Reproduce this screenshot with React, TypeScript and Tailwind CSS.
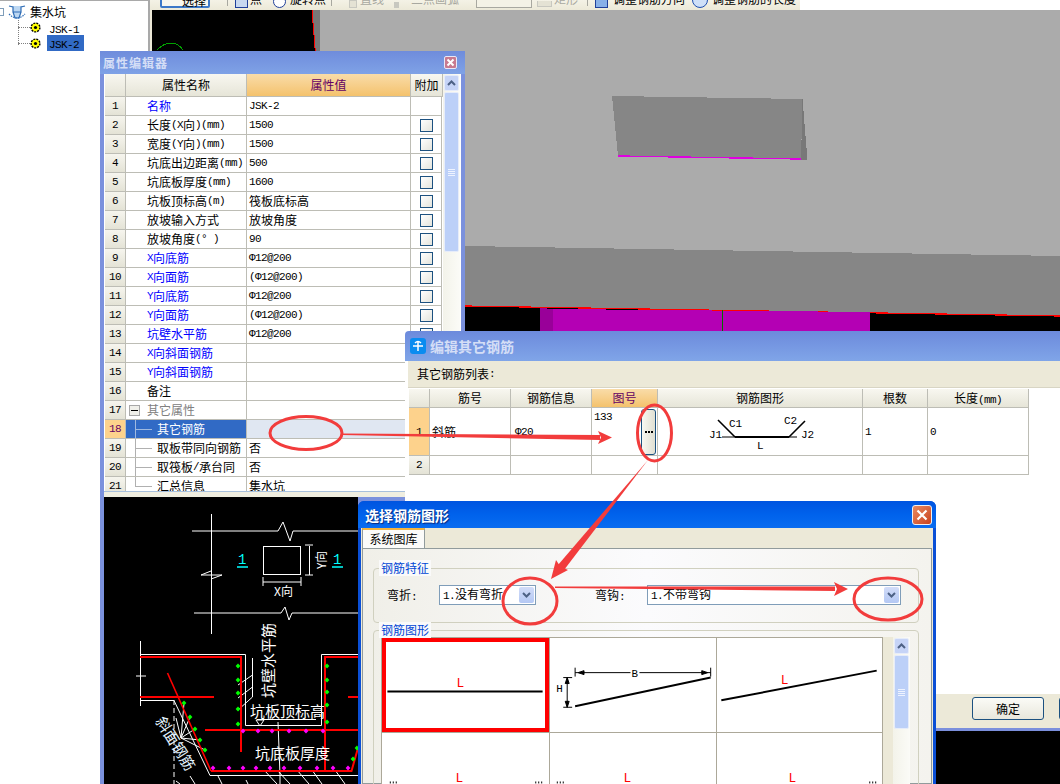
import React from "react";

const latinClass = "font-['Liberation_Mono',monospace] text-[11px] tracking-[-0.6px]";

function T({ children }: { children: string }) {
  const parts = children.split(/([\x00-\x7f°Φ]+)/).filter(Boolean);
  return (
    <>
      {parts.map((p, i) =>
        /[\x00-\x7f°Φ]/.test(p[0]) ? (
          <span key={i} className={latinClass}>
            {p}
          </span>
        ) : (
          <span key={i}>{p}</span>
        )
      )}
    </>
  );
}

const rows: { n: number; name: string; val?: string; blue?: boolean; noCheck?: boolean }[] = [
  { n: 1, name: "名称", val: "JSK-2", blue: true, noCheck: true },
  { n: 2, name: "长度(X向)(mm)", val: "1500" },
  { n: 3, name: "宽度(Y向)(mm)", val: "1500" },
  { n: 4, name: "坑底出边距离(mm)", val: "500" },
  { n: 5, name: "坑底板厚度(mm)", val: "1600" },
  { n: 6, name: "坑板顶标高(m)", val: "筏板底标高" },
  { n: 7, name: "放坡输入方式", val: "放坡角度" },
  { n: 8, name: "放坡角度(° )", val: "90" },
  { n: 9, name: "X向底筋", val: "Φ12@200", blue: true },
  { n: 10, name: "X向面筋", val: "(Φ12@200)", blue: true },
  { n: 11, name: "Y向底筋", val: "Φ12@200", blue: true },
  { n: 12, name: "Y向面筋", val: "(Φ12@200)", blue: true },
  { n: 13, name: "坑壁水平筋", val: "Φ12@200", blue: true },
  { n: 14, name: "X向斜面钢筋", blue: true, noCheck: true },
  { n: 15, name: "Y向斜面钢筋", blue: true, noCheck: true },
  { n: 16, name: "备注", noCheck: true },
];

const subRows = [
  { n: 19, name: "取板带同向钢筋", val: "否" },
  { n: 20, name: "取筏板/承台同", val: "否" },
  { n: 21, name: "汇总信息", val: "集水坑" },
];

const numCell =
  "w-[21px] shrink-0 flex items-center justify-center border-r border-b border-[#bdbdb5] bg-gradient-to-b from-[#f6f5ee] to-[#e4e3d6]";

function Check() {
  return <span className="block w-[13px] h-[13px] ml-[1px] border border-[#1c5180] bg-gradient-to-br from-[#ffffff] to-[#e4e4dc]" />;
}

function PropRow({ r }: { r: (typeof rows)[number] }) {
  return (
    <div className="flex h-[19px] shrink-0">
      <div className={numCell}>
        <T>{String(r.n)}</T>
      </div>
      <div className={`w-[121px] shrink-0 pl-[21px] flex items-center border-r border-b border-[#bdbdb5] whitespace-nowrap ${r.blue ? "text-[#0000ff]" : ""}`}>
        <T>{r.name}</T>
      </div>
      <div className="w-[164px] shrink-0 pl-[2px] flex items-center border-r border-b border-[#bdbdb5] whitespace-nowrap">
        {r.val ? <T>{r.val}</T> : null}
      </div>
      <div className="w-[31px] shrink-0 flex items-center justify-center border-r border-b border-[#bdbdb5]">
        {r.noCheck ? null : <Check />}
      </div>
    </div>
  );
}

function TreeLines({ last }: { last?: boolean }) {
  return (
    <>
      <span className={`absolute left-[9px] top-0 w-px bg-[#b0b0b0] ${last ? "h-[10px]" : "h-[19px]"}`} />
      <span className="absolute left-[9px] top-[9px] w-[17px] h-px bg-[#b0b0b0]" />
    </>
  );
}

function ScrollBar({ thumbH }: { thumbH: string }) {
  return (
    <div className="w-[17px] shrink-0 h-full flex flex-col items-center pt-[1px] gap-[1px] bg-gradient-to-r from-[#f3f3ea] to-[#fbfbf7]">
      <div className="w-[15px] h-[16px] shrink-0 rounded-[2px] border border-[#e6ecfa] bg-[#c6d4f7] flex items-center justify-center">
        <svg width="9" height="6" viewBox="0 0 9 6">
          <path d="M1 5L4.5 1.5L8 5" fill="none" stroke="#4d6185" strokeWidth="2" />
        </svg>
      </div>
      <div className={`w-[15px] shrink-0 rounded-[2px] border border-[#e6ecfa] bg-[#bcd0f8] flex flex-col items-center justify-center gap-[1px] ${thumbH}`}>
        <span className="w-[7px] h-px bg-[#eef3ff]" />
        <span className="w-[7px] h-px bg-[#eef3ff]" />
        <span className="w-[7px] h-px bg-[#eef3ff]" />
        <span className="w-[7px] h-px bg-[#eef3ff]" />
      </div>
    </div>
  );
}

function Gear() {
  return (
    <svg width="11" height="11" viewBox="0 0 11 11" className="shrink-0">
      <circle cx="5.5" cy="5.5" r="4.4" fill="#ffff00" stroke="#000" strokeWidth="1.4" strokeDasharray="2 1" />
      <circle cx="5.5" cy="5.5" r="1.6" fill="#000" />
    </svg>
  );
}

function Tree() {
  return (
    <div className="relative w-[150px] h-full shrink-0 bg-white">
      <div className="h-[52px] border-t border-r-2 border-[#a9a9a9] relative">
        <span className="absolute left-[-4px] top-[7px] w-[8px] h-[8px] border border-[#7f9db9] bg-white" />
        <svg className="absolute left-[8px] top-[4px]" width="18" height="16" viewBox="0 0 18 16">
          <path d="M1 1L5 2L5 7L13 7L13 2L17 1M5 7L7 13L11 13L13 7" fill="#bcd7f2" stroke="#2f6db5" strokeWidth="1.2" />
          <path d="M1 9Q9 17 17 9" fill="none" stroke="#2f6db5" strokeWidth="1.2" strokeDasharray="1.5 1" />
        </svg>
        <span className="absolute left-[30px] top-[2px] leading-[17px] text-[12px] whitespace-nowrap">集水坑</span>
        <span className="absolute left-[18px] top-[19px] h-[25px] border-l border-dotted border-[#808080]" />
        <span className="absolute left-[18px] top-[26px] w-[12px] border-t border-dotted border-[#808080]" />
        <span className="absolute left-[18px] top-[42px] w-[12px] border-t border-dotted border-[#808080]" />
        <span className="absolute left-[30px] top-[21px]">
          <Gear />
        </span>
        <span className="absolute left-[30px] top-[37px]">
          <Gear />
        </span>
        <span className="absolute left-[49px] top-[18px] leading-[17px]">
          <T>JSK-1</T>
        </span>
        <span className="absolute left-[47px] top-[34px] w-[37px] h-[16px] pl-[2px] leading-[16px] bg-[#316ac5]">
          <T>JSK-2</T>
        </span>
      </div>
    </div>
  );
}

function TB({ children, gray }: { children: string; gray?: boolean }) {
  return <span className={`whitespace-nowrap ${gray ? "text-[#a8a8a0]" : "text-[#000000]"}`}>{children}</span>;
}

function Toolbar() {
  return (
    <div className="h-[10px] w-[650px] shrink-0 overflow-hidden bg-gradient-to-b from-[#f4f2e6] to-[#ece9d8] flex items-end pb-[4px] text-[12px] leading-[14px]">
      <div className="ml-[10px] w-[50px] h-[14px] shrink-0 border-2 border-[#3c78c8] rounded-[2px] pl-[20px] leading-[9px] mb-[-2px] bg-[#f8f7ef]">
        <TB>选择</TB>
      </div>
      <span className="ml-[17px] w-px h-[8px] shrink-0 bg-[#a8a8a0]" />
      <span className="ml-[7px] w-[13px] h-[9px] shrink-0 border border-[#20409a] bg-[#c8d8f0] mb-[-2px]" />
      <span className="ml-[2px]"><TB>点</TB></span>
      <span className="ml-[11px] w-[13px] h-[13px] shrink-0 rounded-full border border-[#20409a] bg-white mb-[-2px]" />
      <span className="ml-[4px]"><TB>旋转点</TB></span>
      <span className="ml-[5px] w-px h-[8px] shrink-0 bg-[#a8a8a0]" />
      <span className="ml-[17px] w-[8px] h-[8px] shrink-0 border border-[#c8c8c0] bg-[#e4e2d4] mb-[-2px]" />
      <span className="ml-[3px]"><TB gray>直线</TB></span>
      <span className="ml-[10px] w-[5px] h-[6px] shrink-0 bg-[#c8c8c0] mb-[-2px]" />
      <span className="ml-[12px]"><TB gray>三点画弧</TB></span>
      <span className="ml-[17px] w-[56px] h-[9px] shrink-0 bg-[#f4f2e6] border-b border-x border-[#a8a8a0] mb-[-2px]" />
      <span className="ml-[5px] w-[15px] h-[6px] shrink-0 border-b border-x border-[#c8c8c0] bg-[#e4e2d4] mb-[-1px]" />
      <span className="ml-[2px]"><TB gray>矩形</TB></span>
      <span className="ml-[9px] w-px h-[8px] shrink-0 bg-[#a8a8a0]" />
      <span className="ml-[7px] w-[13px] h-[9px] shrink-0 border border-[#20409a] bg-[#88b0e8] mb-[-2px]" />
      <span className="ml-[5px]"><TB>调整钢筋方向</TB></span>
      <span className="ml-[7px] w-[16px] h-[10px] shrink-0 rounded-b-full border border-[#2050b0] bg-[#cfe0f8] mb-[-2px]" />
      <span className="ml-[4px]"><TB>调整钢筋的长度</TB></span>
    </div>
  );
}

function Model() {
  return (
    <svg viewBox="150 10 910 774" className="block w-full flex-1" preserveAspectRatio="none" shapeRendering="crispEdges">
      <rect x="150" y="10" width="910" height="774" fill="#000" />
      <rect x="150" y="10" width="2" height="774" fill="#ece9d8" />
      <path d="M312 10L320 10L320 60L316 60Z" fill="#787878" />
      <path d="M320 10H1060V256L465 246L320 246Z" fill="#ababab" />
      <path d="M312 10L316 60" stroke="#ff0000" strokeWidth="1" />
      <path d="M465 246L1060 256V316L465 306Z" fill="#868686" />
      <path d="M465 306L1060 316" stroke="#ff0000" strokeWidth="1.2" />
      <path d="M553 309L870 312V336H553Z" fill="#b400b4" />
      <path d="M540 308L553 309V336H540Z" fill="#990099" />
      <path d="M722 310V336" stroke="#007000" strokeWidth="1" />
      <path d="M612 96L802.5 99L801 159L618 156Z" fill="#868686" />
      <path d="M802.5 99L807.5 160H801Z" fill="#787878" />
      <path d="M618 156L801 159" stroke="#e000e0" strokeWidth="1.4" />
      <path d="M157 50Q164 43 171 43T183 50" fill="none" stroke="#00a000" strokeWidth="1" />
    </svg>
  );
}

const greenDots: [number, number][] = [
  [238, 666], [238, 680], [238, 693], [238, 709], [238, 724],
  [327, 666], [327, 680], [327, 692], [327, 705], [327, 722],
  [184, 703], [190, 717], [195, 729], [200, 740], [205, 750], [353, 759], [357, 748],
];
const pinkDots: [number, number][] = [
  [243, 731], [258, 731], [272, 731], [289, 731], [306, 731], [323, 731],
  [213, 768], [229, 768], [243, 768], [256, 768], [270, 768], [284, 768], [300, 768], [317, 768], [333, 768], [348, 768],
];

function Cad() {
  return (
    <svg viewBox="104 497 254 287" width="254" height="287" className="block flex-1 bg-black">
      <g stroke="#fff" strokeWidth="1" fill="none">
        <path d="M211.5 514V634" />
        <path d="M192 531H278L283 522L290 541L293 531H358" />
        <path d="M194 613H281L285 607L289 620L292 613H358" />
        <path d="M211 571L201 575H222L211 579" />
        <rect x="263.5" y="546.5" width="37" height="28" />
        <path d="M309.5 546V575M305 545H313M305 575H313" />
        <path d="M263 582H301M263 577V586M301 577V586" />
        <path d="M140.5 641V706M136 676H146" />
        <path d="M140 654.5H245.5V725.5H321.5V654.5H358" />
        <path d="M140 700.5H174L210 775.5H358" />
        <path d="M174 700V784" strokeDasharray="5 3" />
        <path d="M252.5 658V697M252.5 675L238 685M252.5 687L238 698M252.5 697L238 710" />
        <path d="M257 719.5H316" />
        <path d="M256 720L264 720L260 726Z" />
        <path d="M278 722L280 775V784" />
        <path d="M264 770L277 784M277 770L290 784M297 770L309 784M312 770L322 784M335 770L345 784" />
        <path d="M181 738L184 703M181 738L190 717M181 738L195 729M181 738L200 740M181 738L205 750M181 738L176 718" />
        <path d="M176 781L180 784M190 776L195 784M218 776L222 784M246 780L248 784" />
      </g>
      <g stroke="#ff0000" strokeWidth="2" fill="none">
        <path d="M140 657H241V752" />
        <path d="M140 697H214" />
        <path d="M205 730H358" />
        <path d="M358 657H325V771" />
        <path d="M348 697H358" />
        <path d="M211 771H351.5L358 748" />
      </g>
      <path d="M167.5 673L211 771" stroke="#ff0000" strokeWidth="1.6" fill="none" />
      {greenDots.map(([x, y], i) => (
        <rect key={i} x={x - 1.7} y={y - 1.7} width="3.4" height="3.4" fill="#00ff00" transform={`rotate(45 ${x} ${y})`} />
      ))}
      {pinkDots.map(([x, y], i) => (
        <rect key={i} x={x - 1.7} y={y - 1.7} width="3.4" height="3.4" fill="#ff00ff" transform={`rotate(45 ${x} ${y})`} />
      ))}
      <g fontFamily="'Noto Sans CJK SC',sans-serif" fill="#fff">
        <text x="274" y="596" fontSize="12">X向</text>
        <text x="0" y="0" fontSize="12" transform="translate(326 569) rotate(-90)">Y向</text>
        <text x="0" y="0" fontSize="15" transform="translate(274 698) rotate(-90)">坑壁水平筋</text>
        <text x="250" y="717" fontSize="15">坑板顶标高</text>
        <text x="255" y="759" fontSize="15">坑底板厚度</text>
        <text x="0" y="0" fontSize="15" fill="#e4f4ff" transform="translate(155 721) rotate(58)">斜面钢筋</text>
      </g>
      <g fontFamily="'Liberation Mono',monospace" fill="#00ffff" fontSize="14">
        <text x="238" y="564">1</text>
        <text x="333" y="564">1</text>
      </g>
      <path d="M237 567H248M332 567H343" stroke="#00ffff" strokeWidth="1.5" />
    </svg>
  );
}

function PropertyDialog() {
  return (
    <div className="absolute left-[100px] top-[51px] w-[365px] h-[733px] flex flex-col bg-[#7b91dd] pl-[4px] pr-[4px]">
      <div className="h-[23px] -mx-[4px] px-[3px] flex items-center justify-between bg-gradient-to-b from-[#6f8cdc] to-[#7fa2e6] shrink-0">
        <span className="text-[12px] font-bold text-[#d4def6] tracking-[1px]">属性编辑器</span>
        <span className="w-[13px] h-[13px] mr-[5px] rounded-[2px] border border-[#e8e8f8] bg-[#c87a90] flex items-center justify-center">
          <svg width="9" height="9" viewBox="0 0 9 9">
            <path d="M1.5 1.5L7.5 7.5M7.5 1.5L1.5 7.5" stroke="#fff" strokeWidth="2" />
          </svg>
        </span>
      </div>
      <div className="h-[417px] shrink-0 bg-white flex pl-[1px] overflow-hidden">
        <div className="w-[338px] shrink-0 flex flex-col">
          <div className="h-[23px] shrink-0 flex text-center leading-[22px]">
            <div className="w-[21px] shrink-0 border-r border-b border-[#bdbdb5] bg-gradient-to-b from-[#f8f7f0] to-[#e6e5d8]" />
            <div className="w-[121px] shrink-0 border-r border-b border-[#bdbdb5] bg-gradient-to-b from-[#f8f7f0] to-[#e6e5d8]">属性名称</div>
            <div className="w-[164px] shrink-0 border-r border-b border-[#bdbdb5] bg-gradient-to-b from-[#f9dca8] to-[#f4c26c] text-[#640064]">属性值</div>
            <div className="w-[32px] shrink-0 border-r border-b border-[#bdbdb5] bg-gradient-to-b from-[#f8f7f0] to-[#e6e5d8]">附加</div>
          </div>
          {rows.map((r) => (
            <PropRow key={r.n} r={r} />
          ))}
          <div className="flex h-[19px] shrink-0">
            <div className={numCell}><T>17</T></div>
            <div className="relative w-[121px] shrink-0 pl-[21px] flex items-center border-r border-b border-[#bdbdb5] text-[#808080] whitespace-nowrap">
              <span className="absolute left-[3px] top-[4px] w-[11px] h-[11px] border border-[#a8a8a8] bg-[#f0f0ea] flex items-center justify-center">
                <span className="w-[7px] h-px bg-black" />
              </span>
              其它属性
            </div>
            <div className="w-[164px] shrink-0 border-r border-b border-[#bdbdb5]" />
            <div className="w-[31px] shrink-0 border-r border-b border-[#bdbdb5]" />
          </div>
          <div className="flex h-[19px] shrink-0">
            <div className="w-[21px] shrink-0 flex items-center justify-center border-r border-b border-[#bdbdb5] bg-[#fdd28c] text-[#640064]">
              <T>18</T>
            </div>
            <div className="relative w-[121px] shrink-0 pl-[31px] flex items-center bg-[#316ac5] text-white border-r border-b border-[#bdbdb5]">
              <span className="absolute left-[9px] top-0 w-px h-[19px] bg-[#9fb9e0]" />
              <span className="absolute left-[9px] top-[9px] w-[17px] h-px bg-[#9fb9e0]" />
              其它钢筋
            </div>
            <div className="w-[195px] shrink-0 bg-[#e0e7f2] border-b border-[#bdbdb5]" />
          </div>
          {subRows.map((r, i) => (
            <div key={r.n} className="flex h-[19px] shrink-0">
              <div className={numCell}>
                <T>{String(r.n)}</T>
              </div>
              <div className="relative w-[121px] shrink-0 pl-[31px] flex items-center border-r border-b border-[#bdbdb5] whitespace-nowrap overflow-hidden">
                <TreeLines last={i === 2} />
                <T>{r.name}</T>
              </div>
              <div className="w-[164px] shrink-0 pl-[2px] flex items-center border-r border-b border-[#bdbdb5]">{r.val}</div>
              <div className="w-[31px] shrink-0 border-r border-b border-[#bdbdb5]" />
            </div>
          ))}
        </div>
        <ScrollBar thumbH="h-[160px]" />
      </div>
      <div className="h-[1px] shrink-0 bg-[#a8c0dc]" />
      <div className="h-[5px] shrink-0 bg-[#f0eee0]" />
      <Cad />
    </div>
  );
}

function RebarFigure() {
  return (
    <svg viewBox="658 408 205 47" width="205" height="47" className="block">
      <path d="M735 437H789" stroke="#000" strokeWidth="2.2" />
      <path d="M718 420L735 437M789 437L805 421" stroke="#000" strokeWidth="1.6" fill="none" />
      <path d="M722 437H735M789 437H797" stroke="#000" strokeWidth="1" />
      <g fontFamily="'Liberation Mono',monospace" fontSize="11" fill="#000">
        <text x="729" y="427">C1</text>
        <text x="784" y="424">C2</text>
        <text x="709" y="438">J1</text>
        <text x="801" y="438">J2</text>
        <text x="757" y="449">L</text>
      </g>
    </svg>
  );
}

const cellB = "shrink-0 border-r border-b border-[#bdbdb5]";

function EditDialog() {
  return (
    <div className="absolute left-[405px] top-[331px] w-[655px] h-[400px] flex flex-col bg-white pl-[3px]">
      <div className="h-[30px] -ml-[3px] pl-[5px] shrink-0 flex items-center gap-[4px] bg-gradient-to-b from-[#6c8adc] to-[#80a5e8] rounded-tl-[4px]">
        <span className="w-[16px] h-[16px] rounded-[3px] bg-[#0a8cf0] flex items-center justify-center">
          <svg width="12" height="12" viewBox="0 0 12 12">
            <path d="M6 1V11M1 6H11M3 3Q6 0 9 3" fill="none" stroke="#fff" strokeWidth="1.5" />
          </svg>
        </span>
        <span className="text-[14px] leading-[18px] font-bold text-[#d4def6]">编辑其它钢筋</span>
      </div>
      <div className="h-[27px] shrink-0 pl-[9px] flex items-center bg-[#ece9d8] border-b border-[#d8d5c4]">
        <T>其它钢筋列表:</T>
      </div>
      <div className="flex-1 pt-[1px] pl-[1px] min-h-0">
        <div className="flex h-[19px] text-center leading-[18px]">
          <div className={`${cellB} w-[21px] bg-gradient-to-b from-[#f8f7f0] to-[#e6e5d8]`} />
          <div className={`${cellB} w-[81px] bg-gradient-to-b from-[#f8f7f0] to-[#e6e5d8]`}>筋号</div>
          <div className={`${cellB} w-[81px] bg-gradient-to-b from-[#f8f7f0] to-[#e6e5d8]`}>钢筋信息</div>
          <div className={`${cellB} w-[66px] bg-gradient-to-b from-[#f9dca8] to-[#f4c26c] text-[#640064]`}>图号</div>
          <div className={`${cellB} w-[205px] bg-gradient-to-b from-[#f8f7f0] to-[#e6e5d8]`}>钢筋图形</div>
          <div className={`${cellB} w-[65px] bg-gradient-to-b from-[#f8f7f0] to-[#e6e5d8]`}>根数</div>
          <div className={`${cellB} w-[101px] bg-gradient-to-b from-[#f8f7f0] to-[#e6e5d8]`}><T>长度(mm)</T></div>
        </div>
        <div className="flex h-[48px]">
          <div className={`${cellB} w-[21px] bg-[#fdd28c] flex items-center justify-center`}><T>1</T></div>
          <div className={`${cellB} w-[81px] pl-[2px] flex items-center`}>斜筋</div>
          <div className={`${cellB} w-[81px] pl-[4px] flex items-center`}><T>Φ20</T></div>
          <div className={`${cellB} w-[66px] pl-[2px] pt-[2px] flex justify-between leading-[14px]`}>
            <T>133</T>
            <span className="w-[15px] h-[46px] -mt-[1px] mr-[1px] flex items-center justify-center gap-[1px] rounded-[3px] border border-[#1c5180] bg-gradient-to-r from-[#f8f8f2] to-[#e0dfd2]">
              <span className="w-[2px] h-[2px] bg-black" />
              <span className="w-[2px] h-[2px] bg-black" />
              <span className="w-[2px] h-[2px] bg-black" />
            </span>
          </div>
          <div className={`${cellB} w-[205px]`}><RebarFigure /></div>
          <div className={`${cellB} w-[65px] pl-[2px] flex items-center`}><T>1</T></div>
          <div className={`${cellB} w-[101px] pl-[2px] flex items-center`}><T>0</T></div>
        </div>
        <div className="flex h-[19px]">
          <div className={`${cellB} w-[21px] bg-gradient-to-b from-[#f6f5ee] to-[#e4e3d6] flex items-center justify-center`}><T>2</T></div>
          <div className={`${cellB} w-[81px]`} />
          <div className={`${cellB} w-[81px]`} />
          <div className={`${cellB} w-[66px]`} />
          <div className={`${cellB} w-[205px]`} />
          <div className={`${cellB} w-[65px]`} />
          <div className={`${cellB} w-[101px]`} />
        </div>
      </div>
      <div className="h-[34px] shrink-0 bg-[#ece9d8] pl-[564px] pt-[3px] flex gap-[15px]">
        <span className="w-[72px] h-[23px] shrink-0 rounded-[3px] border border-[#1c5180] bg-gradient-to-b from-[#fbfbf6] to-[#e8e7dc] flex items-center justify-center">确定</span>
        <span className="w-[72px] h-[23px] shrink-0 rounded-[3px] border border-[#1c5180] bg-gradient-to-b from-[#fbfbf6] to-[#e8e7dc]" />
      </div>
      <div className="h-[3px] shrink-0 bg-[#7b8fdc]" />
    </div>
  );
}

function Combo({ text, width }: { text: string; width: string }) {
  return (
    <div className={`h-[20px] shrink-0 border border-[#7f9db9] bg-white flex items-center justify-between pl-[3px] pr-[1px] ${width}`}>
      <span className="whitespace-nowrap"><T>{text}</T></span>
      <span className="w-[15px] h-[16px] rounded-[2px] bg-gradient-to-b from-[#d2dcf8] to-[#b4c8f4] flex items-center justify-center">
        <svg width="9" height="6" viewBox="0 0 9 6">
          <path d="M1 1L4.5 4.5L8 1" fill="none" stroke="#4d6185" strokeWidth="2" />
        </svg>
      </span>
    </div>
  );
}

function Group({ title, children, className }: { title: string; children: React.ReactNode; className: string }) {
  return (
    <div className={`relative border border-[#d0d0bf] rounded-[4px] ${className}`}>
      <span className="absolute left-[5px] -top-[9px] px-[2px] leading-[16px] bg-[#fafafa] text-[#0046d5]">{title}</span>
      {children}
    </div>
  );
}

const redLabel = { fontFamily: "'Liberation Mono',monospace", fontSize: 13, fill: "#ff0000" };

function Cells() {
  const cell = "border-r border-b border-[#aca899] bg-white overflow-hidden";
  return (
    <div className="grid grid-cols-[168px_167px_166px] grid-rows-[95px_95px] w-[501px] shrink-0 border-l border-t border-[#aca899] box-content">
      <div className={cell}>
        <div className="h-full border-[4px] border-[#ff0000]">
          <svg viewBox="0 0 160 87" className="block w-full h-full">
            <path d="M1 50H158" stroke="#000" strokeWidth="2" />
            <text x="71" y="46" {...redLabel}>L</text>
          </svg>
        </div>
      </div>
      <div className={cell}>
        <svg viewBox="549 638 167 95" className="block w-full h-full">
          <path d="M574 707L711 678" stroke="#000" strokeWidth="2" />
          <path d="M574 668V677M711 668V677M574 673H630M639 673H711M577 673L583 671V675ZM708 673L702 671V675Z" stroke="#000" strokeWidth="1" />
          <path d="M562 678H571M562 708H571M566 678V708M566 678L564 684H568ZM566 708L564 702H568Z" stroke="#000" strokeWidth="1" />
          <g fontFamily="'Liberation Mono',monospace" fontSize="11" fill="#000">
            <text x="631" y="677">B</text>
            <text x="555" y="693">H</text>
          </g>
        </svg>
      </div>
      <div className={cell}>
        <svg viewBox="716 638 166 95" className="block w-full h-full">
          <path d="M720 701L877 671" stroke="#000" strokeWidth="2" />
          <text x="780" y="684" {...redLabel}>L</text>
        </svg>
      </div>
      <div className={cell}>
        <svg viewBox="381 733 168 95" className="block w-full h-full">
          <text x="455" y="783" {...redLabel}>L</text>
          <path d="M389 782V784M392 782V784M395 782V784M536 782V784M539 782V784M542 782V784" stroke="#000" />
        </svg>
      </div>
      <div className={cell}>
        <svg viewBox="549 733 167 95" className="block w-full h-full">
          <text x="623" y="783" {...redLabel}>L</text>
          <path d="M556 782V784M559 782V784M562 782V784" stroke="#000" />
        </svg>
      </div>
      <div className={cell}>
        <svg viewBox="716 733 166 95" className="block w-full h-full">
          <text x="788" y="783" {...redLabel}>L</text>
          <path d="M870 782V784M873 782V784M876 782V784" stroke="#000" />
        </svg>
      </div>
    </div>
  );
}

function SelectDialog() {
  return (
    <div className="absolute left-[358px] top-[501px] w-[578px] h-[283px] flex flex-col rounded-t-[6px] bg-[#0a4fd6] px-[3px] overflow-hidden">
      <div className="h-[27px] shrink-0 -mx-[3px] pl-[7px] pr-[4px] flex items-center justify-between bg-gradient-to-b from-[#0054e0] via-[#0062ec] to-[#0a6cf0]">
        <span className="text-[14px] font-bold text-white [text-shadow:1px_1px_1px_#0a2a80]">选择钢筋图形</span>
        <span className="w-[20px] h-[20px] rounded-[3px] border border-[#f0f0f0] bg-gradient-to-br from-[#e88a60] to-[#c8401c] flex items-center justify-center">
          <svg width="12" height="12" viewBox="0 0 12 12">
            <path d="M1.5 1.5L10.5 10.5M10.5 1.5L1.5 10.5" stroke="#fff" strokeWidth="2.2" />
          </svg>
        </span>
      </div>
      <div className="flex-1 min-h-0 bg-[#ece9d8] flex flex-col pl-[1px] pr-[1px]">
        <div className="h-[20px] shrink-0 flex items-end">
          <span className="w-[63px] h-[20px] border-t-2 border-[#f4b440] border-x border-x-[#919b9c] bg-[#fbfbf9] flex items-center justify-center leading-[16px]">系统图库</span>
        </div>
        <div className="flex-1 min-h-0 border border-[#919b9c] bg-gradient-to-r from-[#f0efe8] via-[#fbfbfd] to-[#f4f3ee] pt-[19px] pl-[10px]">
          <Group title="钢筋特征" className="w-[546px] h-[55px] flex items-start pt-[16px]">
            <span className="ml-[13px] w-[52px] leading-[20px] shrink-0"><T>弯折:</T></span>
            <Combo text="1.没有弯折" width="w-[97px]" />
            <span className="ml-[59px] w-[52px] leading-[20px] shrink-0"><T>弯钩:</T></span>
            <Combo text="1.不带弯钩" width="w-[254px]" />
          </Group>
          <Group title="钢筋图形" className="mt-[7px] w-[546px] h-[200px] pl-[7px] pt-[6px]">
            <div className="flex h-[190px]">
              <Cells />
              <div className="w-[10px] shrink-0 bg-[#ece9d8] h-full" />
              <ScrollBar thumbH="h-[74px]" />
            </div>
          </Group>
        </div>
      </div>
    </div>
  );
}

function Annotations() {
  const s = "#f23c3c";
  return (
    <svg viewBox="0 0 1060 784" width="1060" height="784" className="absolute inset-0 pointer-events-none" fill="none">
      <ellipse cx="306" cy="433" rx="36" ry="16.5" stroke={s} strokeWidth="3" />
      <ellipse cx="654.5" cy="433" rx="17" ry="28" stroke={s} strokeWidth="3" />
      <ellipse cx="530" cy="601" rx="27" ry="23" stroke={s} strokeWidth="3" />
      <ellipse cx="888" cy="599" rx="34" ry="21" stroke={s} strokeWidth="3" />
      <path d="M341 433.5L600 435L600 440L341 435Z" fill={s} />
      <path d="M612 437.5L598 431L601 437.5L598 444Z" fill={s} />
      <path d="M648 460L558 565L564 570L648 460Z" fill={s} />
      <path d="M551 579L556 560L560 566L568 570Z" fill={s} />
      <path d="M555 586.5L835 586.5L835 591L555 588Z" fill={s} />
      <path d="M848 589L834 582L837 589L834 596Z" fill={s} />
    </svg>
  );
}

export default function App() {
  return (
    <div className="relative w-[1060px] h-[784px] overflow-hidden bg-white text-[12px] leading-[14px] text-black font-['Noto_Sans_CJK_SC',sans-serif] flex">
      <Tree />
      <div className="flex-1 min-w-0 flex flex-col">
        <Toolbar />
        <Model />
      </div>
      <PropertyDialog />
      <EditDialog />
      <SelectDialog />
      <Annotations />
    </div>
  );
}
